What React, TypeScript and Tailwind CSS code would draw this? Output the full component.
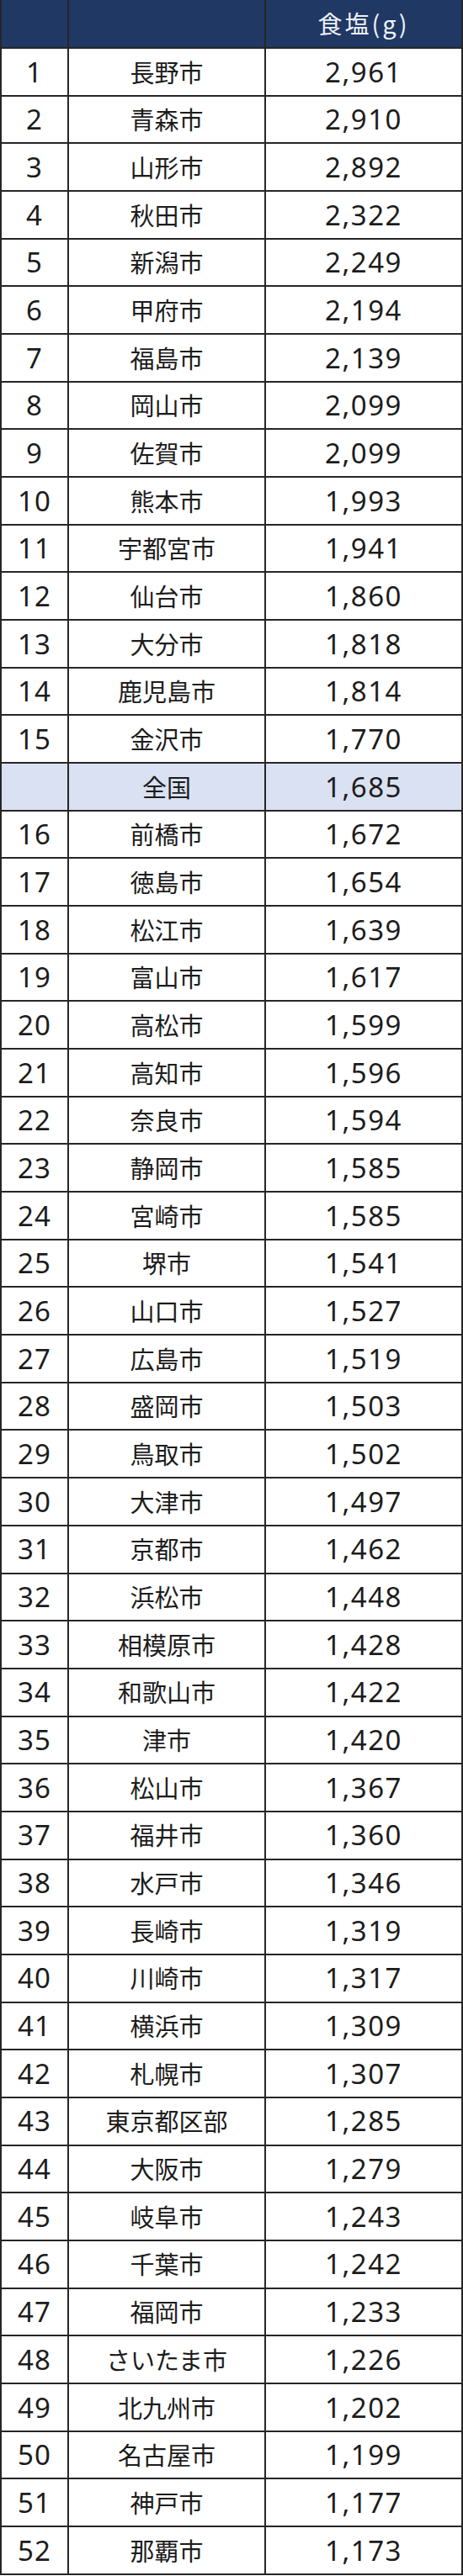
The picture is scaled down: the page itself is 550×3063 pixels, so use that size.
const rows: [string, string, string][] = [
  ['1', '長野市', '2,961'],
  ['2', '青森市', '2,910'],
  ['3', '山形市', '2,892'],
  ['4', '秋田市', '2,322'],
  ['5', '新潟市', '2,249'],
  ['6', '甲府市', '2,194'],
  ['7', '福島市', '2,139'],
  ['8', '岡山市', '2,099'],
  ['9', '佐賀市', '2,099'],
  ['10', '熊本市', '1,993'],
  ['11', '宇都宮市', '1,941'],
  ['12', '仙台市', '1,860'],
  ['13', '大分市', '1,818'],
  ['14', '鹿児島市', '1,814'],
  ['15', '金沢市', '1,770'],
  ['', '全国', '1,685'],
  ['16', '前橋市', '1,672'],
  ['17', '徳島市', '1,654'],
  ['18', '松江市', '1,639'],
  ['19', '富山市', '1,617'],
  ['20', '高松市', '1,599'],
  ['21', '高知市', '1,596'],
  ['22', '奈良市', '1,594'],
  ['23', '静岡市', '1,585'],
  ['24', '宮崎市', '1,585'],
  ['25', '堺市', '1,541'],
  ['26', '山口市', '1,527'],
  ['27', '広島市', '1,519'],
  ['28', '盛岡市', '1,503'],
  ['29', '鳥取市', '1,502'],
  ['30', '大津市', '1,497'],
  ['31', '京都市', '1,462'],
  ['32', '浜松市', '1,448'],
  ['33', '相模原市', '1,428'],
  ['34', '和歌山市', '1,422'],
  ['35', '津市', '1,420'],
  ['36', '松山市', '1,367'],
  ['37', '福井市', '1,360'],
  ['38', '水戸市', '1,346'],
  ['39', '長崎市', '1,319'],
  ['40', '川崎市', '1,317'],
  ['41', '横浜市', '1,309'],
  ['42', '札幌市', '1,307'],
  ['43', '東京都区部', '1,285'],
  ['44', '大阪市', '1,279'],
  ['45', '岐阜市', '1,243'],
  ['46', '千葉市', '1,242'],
  ['47', '福岡市', '1,233'],
  ['48', 'さいたま市', '1,226'],
  ['49', '北九州市', '1,202'],
  ['50', '名古屋市', '1,199'],
  ['51', '神戸市', '1,177'],
  ['52', '那覇市', '1,173'],
]

// rank / value columns use latin digits, city column is CJK
export default function App() {
  return (
    <div className="w-[550px] bg-white text-[#1c1c1c] font-['Noto_Sans','Noto_Sans_CJK_JP',sans-serif] border-l-2 border-r-2 border-[#262626]">
      <div className="flex h-[58px] bg-[#203864] border-b-2 border-[#262626] text-[#eef1f7]">
        <div className="w-[80px] shrink-0 border-r-2 border-[#262626]" />
        <div className="w-[234px] shrink-0 border-r-2 border-[#262626]" />
        <div className="flex-1 flex items-center justify-center font-['Noto_Sans_CJK_JP',sans-serif] text-[29px] tracking-[3px]">食塩(g)</div>
      </div>
      {rows.map(([rank, city, salt]) => (
        <div
          key={city}
          className={`flex h-[56.68px] border-b-2 border-[#262626] ${rank === '' ? 'bg-[#d9e1f2]' : ''}`}
        >
          <div className="w-[80px] shrink-0 border-r-2 border-[#262626] flex items-center justify-center text-[33px] tracking-[1px]">{rank}</div>
          <div className="w-[234px] shrink-0 border-r-2 border-[#262626] flex items-center justify-center font-['Noto_Sans_CJK_JP',sans-serif] text-[29px]">{city}</div>
          <div className="flex-1 flex items-center justify-center text-[33px] tracking-[1.5px]">{salt}</div>
        </div>
      ))}
    </div>
  )
}
